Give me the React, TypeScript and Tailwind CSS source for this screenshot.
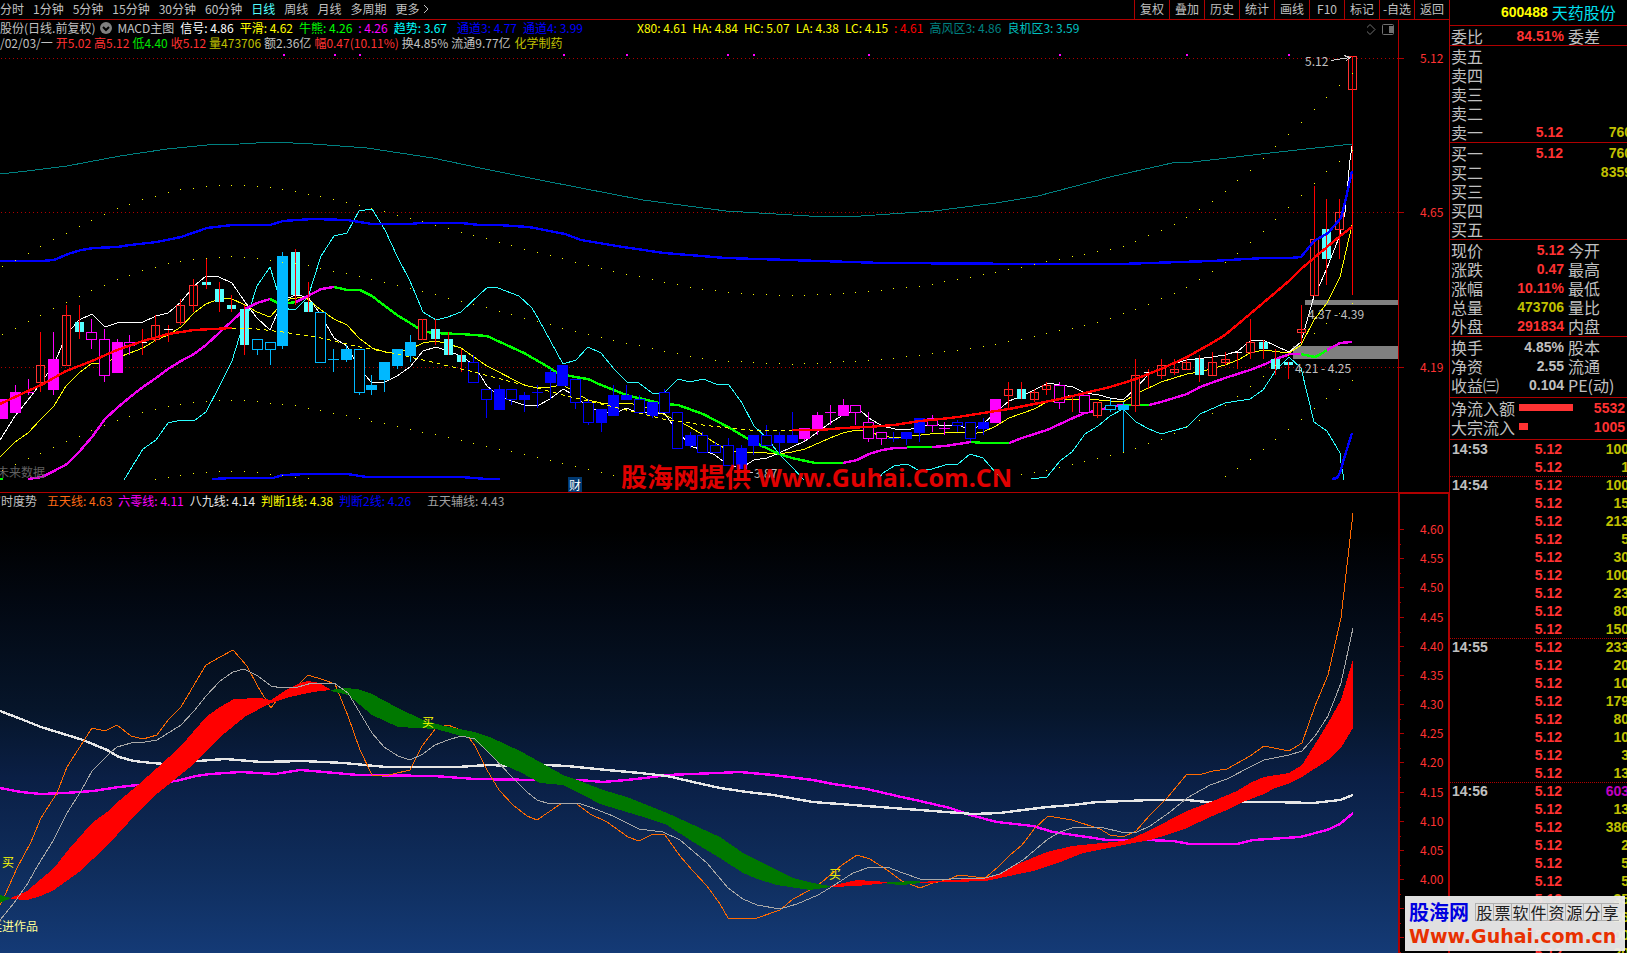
// src/App.tsx
import React from 'react'

type Kind = 'R' | 'C' | 'M' | 'm' | 'B' | 'b' | 'D' | 'd' | 'W'
type Candle = [high: number, top: number, bottom: number, low: number, kind: Kind]

const PERIODS = ['分时', '1分钟', '5分钟', '15分钟', '30分钟', '60分钟', '日线', '周线', '月线', '多周期']
const TOOLS = ['复权', '叠加', '历史', '统计', '画线', 'F10', '标记', '-自选', '返回']

// Candles from left to right, R/C are the narrow ones, capitals are filled
const CANDLES: Candle[] = [
  [399, 399, 419, 419, 'M'], [385, 392, 413, 413, 'M'], [379, 392, 392, 395, 'm'], [332, 365, 382, 392, 'R'],
  [332, 359, 390, 395, 'M'], [305, 315, 365, 366, 'R'], [305, 322, 332, 339, 'C'], [319, 332, 339, 349, 'm'],
  [329, 339, 375, 382, 'm'], [339, 342, 373, 373, 'M'], [335, 342, 345, 355, 'm'], [329, 342, 342, 355, 'W'],
  [315, 325, 339, 342, 'R'], [325, 329, 329, 342, 'W'], [299, 305, 322, 325, 'R'], [279, 285, 305, 312, 'R'],
  [259, 282, 285, 289, 'C'], [282, 289, 302, 312, 'C'], [295, 305, 309, 312, 'C'], [305, 309, 345, 355, 'C'],
  [339, 339, 349, 355, 'b'], [342, 342, 349, 365, 'b'], [252, 256, 346, 349, 'B'], [249, 252, 295, 305, 'C'],
  [282, 302, 312, 312, 'C'], [312, 312, 362, 362, 'b'], [349, 359, 359, 372, 'B'], [345, 349, 360, 362, 'B'],
  [349, 349, 392, 395, 'b'], [375, 385, 390, 395, 'B'], [362, 362, 380, 392, 'B'], [349, 349, 366, 369, 'B'],
  [335, 342, 356, 362, 'B'], [319, 319, 339, 340, 'R'], [319, 329, 339, 345, 'C'], [332, 339, 355, 355, 'C'],
  [349, 355, 362, 372, 'C'], [355, 362, 382, 383, 'd'], [389, 389, 399, 418, 'd'], [385, 389, 410, 410, 'D'],
  [389, 389, 399, 405, 'd'], [392, 395, 400, 412, 'D'], [385, 392, 392, 408, 'D'], [369, 372, 383, 399, 'D'],
  [365, 365, 386, 386, 'D'], [379, 379, 402, 409, 'd'], [399, 402, 422, 425, 'd'], [409, 409, 423, 432, 'D'],
  [385, 395, 416, 416, 'D'], [385, 395, 400, 400, 'D'], [395, 399, 412, 412, 'd'], [402, 402, 416, 418, 'D'],
  [389, 392, 412, 412, 'd'], [412, 412, 448, 448, 'd'], [432, 435, 446, 448, 'D'], [432, 435, 452, 452, 'd'],
  [442, 445, 452, 452, 'd'], [438, 445, 465, 465, 'd'], [445, 448, 469, 469, 'D'], [435, 435, 446, 455, 'D'],
  [425, 435, 445, 445, 'd'], [432, 435, 443, 454, 'D'], [412, 435, 443, 443, 'D'], [428, 428, 439, 441, 'M'],
  [412, 415, 429, 435, 'M'], [405, 412, 412, 425, 'm'], [399, 405, 416, 416, 'M'], [405, 405, 412, 425, 'm'],
  [412, 422, 438, 442, 'm'], [432, 432, 438, 445, 'm'], [432, 438, 438, 442, 'D'], [432, 432, 439, 445, 'D'],
  [418, 418, 433, 442, 'D'], [415, 418, 425, 432, 'm'], [422, 428, 428, 435, 'm'], [420, 422, 425, 432, 'd'],
  [422, 422, 438, 441, 'd'], [418, 422, 429, 435, 'D'], [399, 399, 423, 423, 'M'], [382, 389, 395, 409, 'R'],
  [382, 389, 399, 399, 'C'], [389, 392, 399, 402, 'R'], [382, 385, 389, 395, 'R'], [382, 385, 402, 409, 'm'],
  [395, 395, 395, 412, 'W'], [395, 395, 412, 412, 'm'], [402, 402, 415, 418, 'R'], [399, 405, 409, 412, 'b'],
  [402, 405, 410, 452, 'B'], [359, 375, 405, 412, 'R'], [369, 372, 372, 389, 'W'], [359, 365, 375, 379, 'R'],
  [359, 369, 372, 375, 'R'], [358, 362, 369, 370, 'R'], [355, 359, 375, 382, 'C'], [352, 362, 375, 375, 'R'],
  [352, 359, 362, 365, 'R'], [352, 352, 352, 369, 'W'], [319, 342, 352, 359, 'R'], [340, 342, 349, 359, 'C'],
  [349, 359, 369, 375, 'C'], [362, 362, 365, 379, 'C'], [305, 329, 332, 343, 'R'], [186, 239, 295, 296, 'R'],
  [199, 229, 259, 285, 'C'], [199, 212, 229, 259, 'R'], [56, 56, 89, 295, 'R'],
]

const COLORS: Record<Kind, string> = {
  R: '#ff3232', C: '#54ffff', M: '#ff00ff', m: '#ff00ff', B: '#00b8ff', b: '#00b8ff', D: '#0000ff', d: '#0000ff', W: '#ffffff',
}

const TEAL = '0,174 27,171 67,166 120,156 167,149 207,145 240,144 273,142 313,144 367,148 400,153 433,158 480,168 540,180 581,188 643,200 726,211 809,216 861,216 934,211 996,203 1038,196 1110,177 1172,163 1193,162 1270,153 1352,144'
const BLUE = '0,261 41,261 54,260 68,254 81,250 94,248 117,247 130,245 157,242 181,237 207,228 232,225 270,225 283,221 313,219 347,220 372,224 410,224 420,223 461,223 480,225 498,225 529,227 565,234 581,240 623,247 664,253 726,258 820,261 882,263 1038,264 1120,264 1180,262 1212,261 1264,258 1290,258 1301,257 1314,241 1328,233 1341,218 1346,198 1352,171'
const BLUE_LOW = '212,479 233,478 273,478 283,475 307,474 347,474 367,477 461,477 487,479 500,479'
const BLUE_RIGHT = '1332,479 1337,478 1340,473 1343,462 1352,433'
const RED_LEFT = '0,404 15,397 43,384 66,371 92,361 117,350 143,341 168,334 194,330 213,329 232,328'
const YELLOW_DASH = '232,328 257,329 283,332 321,338 360,347 397,354 436,363 474,372 512,382 537,388 563,395 588,401 614,407 639,413 663,419 683,422 703,425 728,428 750,430 792,430'
const RED_RIGHT = '792,430 820,430 843,428 868,427 894,425 907,423 920,421 932,420 958,417 983,413 1009,409 1034,404 1060,399 1085,393 1110,387 1133,380 1161,369 1187,357 1212,343 1225,335 1250,314 1276,292 1290,280 1301,269 1314,258 1327,247 1340,236 1352,227'
const MA_UP = [
  '28,479 42,477 54,471 67,464 79,452 92,437 105,419 117,408 130,397 143,387 156,378 168,369 181,361 194,354 206,345 219,333 232,321 245,309 257,303 270,299',
  '296,302 308,296 321,289 334,287',
  '843,463 857,460 869,454 882,450 895,448 907,448',
  '932,447 945,446 958,444 971,442',
  '1009,443 1022,438 1047,430 1060,424 1073,418 1085,413 1099,410 1115,406 1123,405',
  '1149,405 1161,402 1187,394 1200,387 1225,378 1250,370 1263,365 1276,359 1290,354 1301,354',
  '1327,350 1340,343 1352,342',
]
const MA_DOWN = [
  '270,299 278,303 283,304 296,302',
  '334,287 347,290 360,290 372,296 385,306 397,315 410,323 421,330 432,333 461,334 487,336 500,342 524,353 550,368 557,373 575,377 588,379 601,385 626,395 651,401 663,404 678,405 703,414 728,427 750,440 760,445 779,454 792,458 815,463 843,463',
  '907,447 932,447', '971,442 983,443 1009,443', '1123,405 1149,405', '1301,354 1310,356 1315,357 1321,354 1327,350', '0,479 3,479',
]
const WHITE = '0,440 15,416 28,400 41,383 54,364 67,334 79,320 92,314 105,327 117,323 143,322 156,316 168,313 181,302 194,286 206,276 219,277 232,283 245,302 257,318 270,330 283,300 296,295 308,297 321,315 334,338 347,346 359,368 372,383 385,382 397,376 410,367 423,351 436,347 448,351 461,356 474,365 487,386 500,397 512,401 524,405 537,406 550,399 563,389 572,394 588,407 601,412 614,414 626,408 639,413 651,412 665,414 672,424 690,446 703,450 715,455 728,465 741,468 754,460 767,458 779,453 792,447 805,441 818,432 830,423 843,415 856,410 862,412 869,418 882,426 895,429 907,430 919,427 932,424 945,426 958,425 971,430 983,424 996,412 1009,401 1022,396 1034,390 1048,383 1060,385 1073,387 1085,393 1099,395 1110,398 1123,400 1136,388 1149,374 1161,367 1187,360 1212,357 1225,355 1238,351 1250,341 1263,340 1276,346 1289,352 1301,342 1314,296 1320,284 1327,268 1340,235 1345,212 1350,160 1352,146'
const YELLOW = '0,457 15,442 28,433 41,419 54,406 66,386 79,373 92,363 100,364 111,360 130,353 143,348 156,340 168,335 181,327 194,313 206,304 219,299 230,298 245,305 257,312 270,317 278,308 290,299 305,297 321,310 334,319 347,325 359,338 372,348 385,352 397,352 410,349 423,343 436,341 448,344 461,348 487,366 524,385 537,388 550,387 563,385 588,400 601,403 614,404 626,403 639,405 663,414 690,427 703,435 715,443 728,450 741,453 754,452 779,454 792,452 805,449 830,438 843,433 856,430 869,432 882,436 895,438 930,434 945,433 958,432 971,434 983,432 996,426 1009,418 1034,409 1047,402 1073,399 1099,400 1123,402 1136,394 1161,382 1187,374 1200,372 1225,365 1238,360 1250,353 1263,350 1289,353 1301,345 1314,320 1327,303 1340,277 1352,225'
const CYAN = [
  '124,480 143,449 156,440 168,423 181,420 194,421 206,412 219,387 232,361 240,335 250,308 257,286 270,267 278,293 289,310 296,309 308,297 321,256 334,236 347,233 359,211 372,209 385,230 397,256 410,281 423,312 436,320 448,317 461,312 480,294 488,287 498,288 519,296 532,308 539,320 563,364 576,360 588,347 601,353 614,369 627,382 639,383 652,393 663,394 678,379 690,382 703,379 716,384 729,385 742,403 754,426 767,438 779,454 792,467 804,480',
  '878,479 883,473 894,466 907,464 920,471 932,469 945,465 958,464 970,454 983,458 996,473 1004,480',
  '1031,479 1047,477 1060,461 1072,452 1085,434 1098,426 1110,416 1123,409 1136,422 1149,429 1161,434 1187,427 1200,414 1225,403 1250,399 1263,390 1276,370 1289,357 1301,368 1314,422 1327,431 1340,453 1341,463 1344,480',
]

// Dotted bands: [candle index, y] knots, one dot per candle
const BANDS: [number, number][][] = [
  [[-1, 266], [0, 260], [3, 239], [5, 226], [8, 208], [10, 199], [13, 189], [16, 185], [18, 185], [20, 187], [22, 191], [24, 196], [28, 208], [32, 221], [36, 235], [41, 252], [47, 271], [53, 287], [57, 293], [61, 295], [65, 293], [71, 286], [77, 272], [83, 256], [87, 246], [90, 230], [92, 217], [94, 201], [97, 170], [105, 73]],
  [[-1, 334], [0, 328], [3, 308], [6, 290], [8, 279], [10, 270], [12, 263], [14, 259], [17, 256], [19, 258], [23, 265], [27, 276], [31, 288], [36, 304], [41, 321], [45, 334], [51, 351], [55, 360], [61, 364], [67, 360], [71, 355], [76, 346], [80, 336], [85, 322], [88, 309], [92, 287], [94, 271], [96, 253], [98, 231], [103, 171], [105, 150]],
  [[-1, 470], [0, 464], [3, 447], [6, 430], [8, 420], [10, 412], [12, 406], [14, 402], [16, 400], [18, 400], [22, 405], [26, 415], [35, 440], [41, 457], [47, 475]],
  [[77, 478], [79, 474], [81, 470], [83, 464], [87, 452], [90, 439], [93, 420], [95, 405], [97, 386], [100, 355], [102, 333], [105, 303]],
  [[11, 479], [14, 473], [16, 471], [18, 471], [21, 475], [23, 478]],
  [[95, 476], [97, 459], [100, 429], [103, 398], [105, 380]],
]

const LOWER_WHITE = '0,711 21,719 41,727 83,740 107,750 119,757 134,761 152,763 165,764 198,761 225,759 262,762 303,761 344,763 386,767 458,767 472,766 489,765 513,766 545,765 567,766 587,768 607,770 640,773 667,776 693,782 720,788 747,792 773,795 813,802 853,805 893,808 933,811 973,814 1000,813 1023,810 1047,807 1073,805 1097,802 1127,801 1150,800 1187,800 1207,802 1273,802 1313,803 1340,800 1353,795'
const LOWER_MAGENTA = '0,788 21,792 41,794 65,793 93,791 119,787 138,785 176,781 196,776 210,774 241,772 275,774 300,770 324,772 358,775 434,776 475,779 537,780 580,780 603,782 627,780 653,777 667,775 717,773 740,772 773,775 813,780 833,784 867,789 897,796 920,801 950,808 970,815 997,822 1033,826 1053,832 1080,836 1107,840 1147,840 1173,841 1190,844 1237,844 1253,840 1300,837 1327,830 1340,824 1353,813'
const LOWER_ORANGE = '0,905 5,895 17,868 31,842 41,818 57,793 67,767 83,742 92,728 105,731 117,725 131,736 143,739 157,735 169,719 181,707 194,685 206,665 220,657 233,650 247,666 258,687 271,708 279,697 296,687 308,675 324,680 335,684 348,716 360,750 372,775 389,775 410,770 422,746 436,728 448,725 458,729 470,739 475,746 487,770 499,790 513,805 527,816 537,820 562,803 577,804 590,814 607,822 628,837 639,841 653,834 665,835 680,856 693,871 707,886 720,904 728,918 757,918 780,910 793,899 810,890 822,882 842,865 857,855 870,859 887,870 902,881 920,888 933,883 947,880 959,875 985,878 998,867 1010,855 1022,845 1035,828 1048,816 1072,820 1100,829 1110,835 1123,837 1136,831 1150,815 1167,798 1187,774 1202,774 1213,771 1227,769 1250,756 1264,746 1289,751 1302,743 1315,706 1328,675 1341,618 1353,513'
const LOWER_GRAY = '0,920 14,903 28,883 38,865 53,841 67,813 81,791 92,771 110,753 117,747 131,743 145,742 157,740 181,725 194,711 206,696 220,681 233,672 244,669 258,676 271,686 282,688 298,687 312,683 334,683 348,693 360,713 372,733 384,747 398,756 410,760 423,754 435,745 448,740 461,736 475,739 492,756 513,778 527,792 537,800 550,804 578,803 590,807 613,816 639,829 663,832 680,840 707,863 728,888 743,899 757,905 780,909 797,904 818,895 833,886 853,873 870,867 887,867 903,873 920,879 943,880 960,878 985,878 1000,874 1023,860 1048,839 1060,832 1072,828 1085,827 1100,827 1125,833 1137,832 1150,826 1170,812 1187,798 1210,785 1227,779 1250,767 1264,760 1289,755 1302,751 1315,736 1328,716 1341,683 1353,628'
const RIBBONS_UP = [
  '11,898 27,891 54,868 69,849 92,823 107,812 120,800 138,785 157,768 181,746 206,717 220,707 234,699 260,698 271,700 286,690 300,683 308,681 320,683 331,690 320,691 303,694 286,698 271,703 246,716 220,737 189,768 158,793 138,812 107,846 79,872 54,890 41,896 27,900 11,899',
  '830,886 857,880 887,882 887,883 857,886 830,887',
  '920,882 985,878 1000,873 1020,863 1047,852 1072,846 1123,841 1133,838 1150,830 1187,811 1213,801 1237,791 1250,783 1264,777 1289,773 1302,765 1317,741 1328,723 1341,700 1353,659 1353,728 1341,748 1328,760 1302,777 1288,784 1275,788 1264,794 1243,802 1227,810 1210,817 1187,828 1170,834 1150,840 1123,845 1083,853 1063,861 1033,871 1000,878 985,881 920,883',
]
const RIBBONS_DOWN = [
  '0,895 11,898 0,903',
  '331,690 344,688 358,689 372,694 396,707 423,720 444,726 475,732 492,738 520,751 540,762 563,775 580,781 603,790 627,797 667,813 687,822 720,837 743,853 767,865 793,878 813,883 830,886 830,887 810,890 777,885 760,880 743,873 720,858 693,842 667,825 640,816 600,804 587,797 563,785 540,783 520,772 499,763 482,747 472,739 436,729 398,727 372,715 348,695 331,691',
  '887,882 920,881 920,883 903,885 887,884',
]

const TICKS: [string, string][] = [
  ['14:53', '100'], ['', '1'], ['14:54', '100'], ['', '15'], ['', '213'], ['', '5'], ['', '30'], ['', '100'], ['', '23'], ['', '80'],
  ['', '150'], ['14:55', '233'], ['', '20'], ['', '10'], ['', '179'], ['', '80'], ['', '10'], ['', '3'], ['', '13'], ['14:56', '603'],
  ['', '13'], ['', '386'], ['', '2'], ['', '5'], ['', '5'], ['', '35'], ['', '26'], ['', '100'], ['', '20'],
]

// A little over 2 keeps the slopes of the bold lines as heavy as their flat parts
const BOLD = 2.4

const candleX = (i: number) => Math.floor(15.4 + i * 12.733)

function bandDots(knots: [number, number][]) {
  const dots: [number, number][] = []
  for (let k = 0; k < knots.length - 1; k++) {
    const [i0, y0] = knots[k]
    const [i1, y1] = knots[k + 1]
    for (let i = i0; i < i1; i++) dots.push([candleX(i), Math.round(y0 + ((y1 - y0) * (i - i0)) / (i1 - i0))])
  }
  const last = knots[knots.length - 1]
  dots.push([candleX(last[0]), last[1]])
  return dots
}

function Line({ points, color, width = 1, dash }: { points: string; color: string; width?: number; dash?: string }) {
  return <polyline points={points} fill="none" stroke={color} strokeWidth={width} strokeDasharray={dash} strokeLinejoin="round" />
}

function CandleShape({ index, candle }: { index: number; candle: Candle }) {
  const [high, top, bottom, low, kind] = candle
  const x = candleX(index)
  const color = COLORS[kind]
  const narrow = kind === 'R' || kind === 'C' || kind === 'W'
  const half = narrow ? 4 : 5
  const wick = narrow ? '#ff0000' : color

  if (top === bottom) {
    return (
      <g fill={wick}>
        <rect x={x} y={high} width={1} height={low - high} />
        <rect x={x - half} y={top} width={half * 2 + 1} height={1} fill={color} />
      </g>
    )
  }
  const filled = kind === 'C' || kind === 'M' || kind === 'B' || kind === 'D'
  const body = filled
    ? <rect x={x - half} y={top} width={half * 2 + 1} height={bottom - top} fill={color} />
    : <rect x={x - half + 0.5} y={top + 0.5} width={half * 2} height={bottom - top} fill="#000" stroke={color} />
  const stem = <rect x={x} y={high} width={1} height={low - high} fill={wick} />
  return narrow ? <g>{body}{stem}</g> : <g>{stem}{body}</g>
}

// Text pinned to a point of a chart, x/y are in chart units
function Pin({ x, y, w, h, className, children }: { x: number; y: number; w: number; h: number; className: string; children: React.ReactNode }) {
  return (
    <span
      className={`absolute -mt-2 leading-4 whitespace-nowrap ${className}`}
      style={{ left: `${(x / w) * 100}%`, top: `${(y / h) * 100}%` }}
    >
      {children}
    </span>
  )
}

function Toolbar() {
  return (
    <nav className="flex h-5 items-stretch justify-between border-b border-[#b00000] text-[#c0c0c0]">
      <div className="flex items-center gap-[9px] pb-[2px]">
        {PERIODS.map((p) => (
          <button key={p} className={p === '日线' ? 'text-[#54ffff]' : ''}>{p}</button>
        ))}
        <button className="flex items-center gap-1">
          更多
          <svg width="6" height="10" fill="none" stroke="currentColor"><path d="M1 1l4 4-4 4" /></svg>
        </button>
      </div>
      <div className="flex">
        {TOOLS.map((t) => (
          <button key={t} className="w-[35px] border-l border-[#b00000] pb-[2px] text-center whitespace-nowrap">{t}</button>
        ))}
      </div>
    </nav>
  )
}

function MainHeader() {
  return (
    <header className="relative flex h-8 flex-col overflow-hidden leading-[14px] whitespace-nowrap">
      <div className="-ml-6 flex h-4 items-center gap-[6px] text-[#ffff00]">
        <span className="text-[#c0c0c0]">天药股份(日线.前复权)</span>
        <svg width="12" height="12" className="-mx-px">
          <circle cx="6" cy="6" r="6" fill="#808080" />
          <path d="M3 5l3 3 3-3" fill="none" stroke="#000" strokeWidth="2" />
        </svg>
        <span className="text-[#c0c0c0]">MACD主图</span>
        <span className="text-white">信号: 4.86</span>
        <span>平滑: 4.62</span>
        <span className="text-[#00ff00]">牛熊: 4.26</span>
        <span className="text-[#ff00ff]">: 4.26</span>
        <span className="text-[#00ffff]">趋势: 3.67</span>
        <span className="ml-1 text-[#0000ff]">通道3: 4.77</span>
        <span className="text-[#0000ff]">通道4: 3.99</span>
        <span className="ml-12">X80: 4.61</span>
        <span>HA: 4.84</span>
        <span>HC: 5.07</span>
        <span>LA: 4.38</span>
        <span>LC: 4.15</span>
        <span className="text-[#ff0000]">: 4.61</span>
        <span className="text-[#008080]">高风区3: 4.86</span>
        <span className="text-[#00c0c0]">良机区3: 3.59</span>
      </div>
      <div className="flex h-[14px] items-center gap-[3px] text-[#ff3232]">
        <span className="text-[#c0c0c0]">/02/03/一</span>
        <span>开5.02</span>
        <span>高5.12</span>
        <span className="text-[#00e600]">低4.40</span>
        <span>收5.12</span>
        <span className="text-[#c0c000]">量473706</span>
        <span className="text-[#c0c0c0]">额2.36亿</span>
        <span>幅0.47(10.11%)</span>
        <span className="text-[#c0c0c0]">换4.85%</span>
        <span className="text-[#c0c0c0]">流通9.77亿</span>
        <span className="ml-px text-[#c0c000]">化学制药</span>
      </div>
      <svg width="30" height="14" fill="none" stroke="#707070" className="absolute top-[3px] right-px">
        <path d="M3 1.500l5 5-5 5-5-5z" className="overflow-visible" />
        <rect x="15.500" y="1.500" width="11" height="10" rx="1" />
        <path d="M22 3h4v7h-4z" fill="#707070" stroke="none" />
      </svg>
    </header>
  )
}

function MainPlot() {
  const pin = { w: 1398, h: 440 }
  return (
    <div className="relative h-[440px] overflow-hidden">
      <svg viewBox="0 52 1398 440" preserveAspectRatio="none" shapeRendering="crispEdges" className="block h-full w-full">
        {[58.5, 212.5, 367.5].map((y) => (
          <path key={y} d={`M1 ${y}H1398`} stroke="#b00000" strokeDasharray="1 3" />
        ))}
        {[283, 334, 359, 563, 626, 727, 753, 868, 1059, 1186, 1288].map((x) => (
          <rect key={x} x={x} y={54} width={2} height={2} fill="#ff00ff" />
        ))}
        <rect x={1305} y={300} width={93} height={5} fill="#808080" />
        <rect x={1293} y={346} width={105} height={13} fill="#808080" />
        <Line points={TEAL} color="#008080" />
        {CYAN.map((p) => <Line key={p} points={p} color="#2bffff" />)}
        <Line points={WHITE} color="#ffffff" />
        <Line points={YELLOW} color="#ffff00" />
        {MA_UP.map((p) => <Line key={p} points={p} color="#f000f0" width={BOLD} />)}
        {MA_DOWN.map((p) => <Line key={p} points={p} color="#00ff00" width={BOLD} />)}
        {CANDLES.map((c, i) => <CandleShape key={i} index={i - 1} candle={c} />)}
        <Line points={BLUE} color="#0000ff" width={BOLD} />
        <Line points={BLUE_LOW} color="#0000ff" width={BOLD} />
        <Line points={BLUE_RIGHT} color="#0000ff" width={BOLD} />
        <Line points={RED_LEFT} color="#ff0000" width={BOLD} />
        <Line points={YELLOW_DASH} color="#ffff00" dash="4 4" />
        <Line points={RED_RIGHT} color="#ff0000" width={BOLD} />
        {BANDS.flatMap(bandDots).map(([x, y], i) => (
          <rect key={i} x={x} y={y} width={1} height={1} fill="#ffff00" />
        ))}
        <path d="M1331 60.500L1350 57.500M1344 55.500L1350 57.500L1346 61M741 472.500H753" fill="none" stroke="#d0d0d0" />
      </svg>
      <Pin {...pin} x={1305} y={9} className="text-[#c0c0c0]">5.12</Pin>
      <Pin {...pin} x={1308} y={262} className="text-[#c0c0c0]">4.37 - 4.39</Pin>
      <Pin {...pin} x={1295} y={316} className="text-[#c0c0c0]">4.21 - 4.25</Pin>
      <Pin {...pin} x={754} y={421} className="text-[#c0c0c0]">3.87</Pin>
      <Pin {...pin} x={-3} y={420} className="text-[#606060]">未来数据</Pin>
      <Pin {...pin} x={568} y={433} className="bg-[#003870] px-px text-white">财</Pin>
      <Pin {...pin} x={621} y={425} className='font-["Open_Sans","Noto_Sans_CJK_SC",sans-serif] text-[26px] font-bold text-[#e00000]'>
        股海网提供 <span className="text-[25px]">Www.Guhai.Com.CN</span>
      </Pin>
    </div>
  )
}

function MainAxis() {
  return (
    <div className="relative w-[50px] text-[#ff3232]">
      {[['5.12', 38], ['4.65', 192], ['4.19', 347]].map(([label, y]) => (
        <React.Fragment key={label}>
          <i className="absolute left-0 h-px w-[5px] bg-[#b00000]" style={{ top: `${(Number(y) / 472) * 100}%` }} />
          <Pin x={21} y={Number(y)} w={50} h={472} className="">{label}</Pin>
        </React.Fragment>
      ))}
    </div>
  )
}

function TrendPlot() {
  const pin = { w: 1398, h: 442 }
  return (
    <div className="flex min-w-0 flex-1 flex-col bg-linear-[180deg,#000_0%,#000_8%,#020710_22%,#06152a_47%,#0a1f45_62%,#0f2d5c_82%,#143a76_100%]">
      <header className="-ml-[11px] flex h-[18px] shrink-0 items-center gap-[6px] pb-[2px] whitespace-nowrap">
        <span className="mr-1 text-[#c0c0c0]">审时度势</span>
        <span className="text-[#ff6a14]">五天线: 4.63</span>
        <span className="text-[#ff00ff]">六零线: 4.11</span>
        <span className="text-[#e6e6e6]">八九线: 4.14</span>
        <span className="text-[#ffff00]">判断1线: 4.38</span>
        <span className="text-[#0000ff]">判断2线: 4.26</span>
        <span className="ml-[10px] text-[#a0a0a0]">五天辅线: 4.43</span>
      </header>
      <div className="relative min-h-0 flex-1 overflow-hidden">
        <svg viewBox="0 511 1398 442" preserveAspectRatio="none" shapeRendering="crispEdges" className="absolute inset-0 h-full w-full">
          <Line points={LOWER_MAGENTA} color="#ff00ff" width={BOLD} />
          <Line points={LOWER_WHITE} color="#e6e6e6" width={BOLD} />
          <Line points={LOWER_ORANGE} color="#ff6a00" />
          {RIBBONS_UP.map((p) => <polygon key={p} points={p} fill="#ff0000" />)}
          {RIBBONS_DOWN.map((p) => <polygon key={p} points={p} fill="#007800" />)}
          <Line points={LOWER_GRAY} color="#a8a8a8" />
        </svg>
        <Pin {...pin} x={2} y={351} className="text-[#ffff00]">买</Pin>
        <Pin {...pin} x={422} y={211} className="text-[#ffff00]">买</Pin>
        <Pin {...pin} x={829} y={363} className="text-[#ffff00]">买</Pin>
        <Pin {...pin} x={-10} y={415} className="text-[#ffff96]">廷进作品</Pin>
      </div>
    </div>
  )
}

function TrendAxis() {
  const rows = Array.from({ length: 15 }, (_, i) => i)
  return (
    <div className="relative w-[51px] overflow-hidden border-t border-r border-l-2 border-[#b00000] text-[#ff3232]">
      {rows.map((i) => {
        const y = 35 + i * 29.17
        return (
          <React.Fragment key={i}>
            <i className="absolute left-0 h-px w-1 bg-[#b00000]" style={{ top: `${(y / 459) * 100}%` }} />
            <i className="absolute left-0 h-px w-px bg-[#b00000]" style={{ top: `${((y + 15) / 459) * 100}%` }} />
            {i < 13 && <Pin x={20} y={y} w={48} h={459} className="">{(4.6 - i * 0.05).toFixed(2)}</Pin>}
          </React.Fragment>
        )
      })}
    </div>
  )
}

function Row({ label, value, color = 'text-[#ff3232]', side }: { label: string; value?: string; color?: string; side?: string }) {
  return (
    <div className="grid h-[19px] grid-cols-[48px_65px_1fr] items-center whitespace-nowrap">
      <span>{label}</span>
      <b className={`text-right font-["Liberation_Sans",sans-serif] text-sm ${color}`}>{value}</b>
      <span className="pl-1">{side}</span>
    </div>
  )
}

function OrderRow({ label, price, volume }: { label: string; price?: string; volume?: string }) {
  return (
    <div className="-mr-[5px] grid h-[19px] grid-cols-[48px_64px_1fr] items-center text-right whitespace-nowrap">
      <span className="text-left">{label}</span>
      <b className='font-["Liberation_Sans",sans-serif] text-sm text-[#ff3232]'>{price}</b>
      <b className='font-["Liberation_Sans",sans-serif] text-sm text-[#c0c000]'>{volume}</b>
    </div>
  )
}

function FlowRow({ label, value, bar }: { label: string; value: string; bar: number }) {
  return (
    <div className="flex h-[19px] items-center whitespace-nowrap">
      <span className="w-[68px]">{label}</span>
      <i className="h-[7px] bg-[#ff3232]" style={{ width: bar }} />
      <b className='mr-[2px] ml-auto font-["Liberation_Sans",sans-serif] text-sm text-[#ff3232]'>{value}</b>
    </div>
  )
}

function QuotePanel() {
  const block = 'border-b border-[#b00000] pl-px'
  return (
    <aside className="relative w-[178px] shrink-0 overflow-hidden border-l border-[#b00000] text-base leading-[18px] text-[#c0c0c0]">
      <h1 className="flex h-[26px] items-center gap-1 border-b border-[#b00000] pb-[2px] pl-[51px] whitespace-nowrap">
        <b className='font-["Liberation_Sans",sans-serif] text-sm text-[#ffff00]'>600488</b>
        <span className="text-[#00e0f0]">天药股份</span>
      </h1>
      <div className={block}>
        <Row label="委比" value="84.51%" side="委差" />
      </div>
      <div className={`${block} pb-px`}>
        <OrderRow label="卖五" />
        <OrderRow label="卖四" />
        <OrderRow label="卖三" />
        <OrderRow label="卖二" />
        <OrderRow label="卖一" price="5.12" volume="760" />
      </div>
      <div className={`${block} pb-px`}>
        <OrderRow label="买一" price="5.12" volume="760" />
        <OrderRow label="买二" volume="8359" />
        <OrderRow label="买三" />
        <OrderRow label="买四" />
        <OrderRow label="买五" />
      </div>
      <div className={`${block} pb-px`}>
        <Row label="现价" value="5.12" side="今开" />
        <Row label="涨跌" value="0.47" side="最高" />
        <Row label="涨幅" value="10.11%" side="最低" />
        <Row label="总量" value="473706" color="text-[#c0c000]" side="量比" />
        <Row label="外盘" value="291834" side="内盘" />
      </div>
      <div className={`${block} pb-[3px]`}>
        <Row label="换手" value="4.85%" color="text-[#c0c0c0]" side="股本" />
        <Row label="净资" value="2.55" color="text-[#c0c0c0]" side="流通" />
        <Row label="收益㈢" value="0.104" color="text-[#c0c0c0]" side="PE(动)" />
      </div>
      <div className={`${block} pb-[3px]`}>
        <FlowRow label="净流入额" value="5532" bar={54} />
        <FlowRow label="大宗流入" value="1005" bar={9} />
      </div>
      <table className='absolute w-[177px] table-fixed font-["Liberation_Sans",sans-serif] text-sm leading-[17px] font-bold'>
        <tbody>
          {TICKS.map(([time, volume], i) => (
            <tr key={i} className={`grid h-[18px] grid-cols-[48px_62px_1fr] items-center pl-[2px] text-right ${time && i ? 'border-t border-dotted border-[#b00000]' : ''}`}>
              <td className="text-left">{time}</td>
              <td className="text-[#ff3232]">5.12</td>
              <td className={`-mr-[2px] ${volume === '603' ? 'text-[#c000c0]' : 'text-[#c0c000]'}`}>{volume}</td>
            </tr>
          ))}
        </tbody>
      </table>
    </aside>
  )
}

function SiteBadge() {
  return (
    <div className="absolute right-[2px] bottom-[2px] flex h-[55px] w-[220px] flex-col justify-center bg-[#ececec]/95 pl-1 whitespace-nowrap">
      <div className="flex h-6 items-center gap-[6px]">
        <b className="text-xl leading-6 text-[#0000e0]">股海网</b>
        <div className="flex text-base leading-[18px] text-[#202020]">
          {[...'股票软件资源分享'].map((ch) => (
            <span key={ch} className="h-[18px] w-[18px] border border-r-0 border-[#b0b0b0] text-center leading-4">{ch}</span>
          ))}
        </div>
      </div>
      <b className='font-["DejaVu_Sans",sans-serif] text-[19px] leading-6 text-[#e83000]'>Www.Guhai.com.cn</b>
    </div>
  )
}

export default function App() {
  return (
    <div className='relative flex h-screen overflow-hidden bg-black font-["Noto_Sans_CJK_SC",sans-serif] text-xs'>
      <main className="flex min-w-0 flex-1 flex-col">
        <Toolbar />
        <section className="flex border-b border-[#b00000]">
          <div className="min-w-0 flex-1 border-r border-[#b00000]">
            <MainHeader />
            <MainPlot />
          </div>
          <MainAxis />
        </section>
        <section className="flex min-h-0 flex-1">
          <TrendPlot />
          <TrendAxis />
        </section>
      </main>
      <QuotePanel />
      <SiteBadge />
    </div>
  )
}
